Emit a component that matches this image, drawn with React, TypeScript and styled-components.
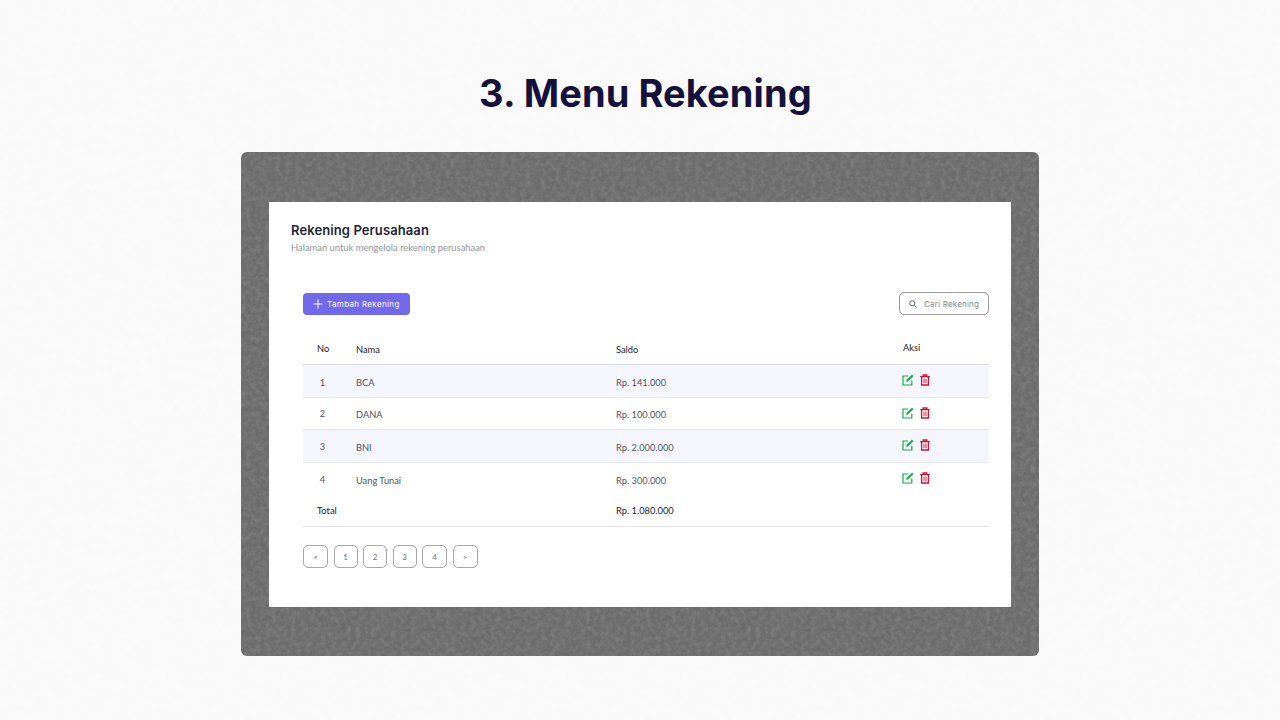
import React from "react";
import styled, { createGlobalStyle } from "styled-components";

const noise = (freq: number, tone: string | number, opacity: number, alpha = "1.6 -0.55") =>
  `url("data:image/svg+xml,${encodeURIComponent(
    `<svg xmlns='http://www.w3.org/2000/svg' width='400' height='400'><filter id='n'><feTurbulence type='fractalNoise' baseFrequency='${freq}' numOctaves='3' seed='4' stitchTiles='stitch'/><feColorMatrix values='0 0 0 0 ${tone} 0 0 0 0 ${tone} 0 0 0 0 ${tone} 0 0 0 ${alpha}'/></filter><rect width='400' height='400' filter='url(#n)' opacity='${opacity}'/></svg>`
  )}")`;

const Global = createGlobalStyle`
  html, body { margin: 0; padding: 0; height: 100%; }
  body { background: #fafafa; font-family: "Inter", "Liberation Sans", sans-serif; }
`;

const Page = styled.main`
  width: 1280px;
  height: 720px;
  overflow: hidden;
  box-sizing: border-box;
  padding-top: 69px;
  display: flex;
  flex-direction: column;
  align-items: center;
  background-color: #fafafa;
  background-image: ${noise(0.12, 0.86, 0.14)};
`;

const Title = styled.h1`
  margin: 0 0 0 11px;
  height: 48px;
  line-height: 48px;
  font-family: "Inter", sans-serif;
  font-size: 38px;
  font-weight: 700;
  letter-spacing: 0.1px;
  color: #14123d;
  white-space: nowrap;
`;

const Frame = styled.section`
  margin-top: 35px;
  width: 798px;
  height: 504px;
  box-sizing: border-box;
  padding: 50px 28px 49px;
  border-radius: 6px;
  background-color: #6c6c6c;
  background-image: ${noise(0.2, 0.3, 0.5)};
`;

const Panel = styled.div`
  width: 742px;
  height: 405px;
  box-sizing: border-box;
  padding: 20px 22px 0;
  background: #fff;
`;

const PanelTitle = styled.h2`
  margin: 0;
  font-size: 13px;
  line-height: 16px;
  font-weight: 600;
  letter-spacing: 0.1px;
  color: #1c2536;
`;

const Subtitle = styled.p`
  margin: 3px 0 0;
  font-family: "Lato", sans-serif;
  font-size: 9.4px;
  line-height: 14px;
  color: #8f939a;
`;

const Content = styled.div`
  margin: 37px 0 0 12px;
  width: 686px;
`;

const Toolbar = styled.div`
  display: flex;
  justify-content: space-between;
  align-items: center;
`;

const AddButton = styled.button`
  width: 107px;
  height: 22px;
  padding: 0 0 0 10px;
  display: flex;
  align-items: center;
  gap: 4px;
  border: 0;
  border-radius: 4px;
  background: #7168ec;
  color: #fff;
  font-family: "Inter", sans-serif;
  font-size: 8px;
  letter-spacing: 0.35px;
`;

const Search = styled.div`
  box-sizing: border-box;
  width: 90px;
  height: 23px;
  padding-left: 9px;
  display: flex;
  align-items: center;
  gap: 7px;
  border: 1px solid #9a9a9a;
  border-radius: 5px;
  font-family: "Inter", sans-serif;
  font-size: 8px;
  letter-spacing: 0.2px;
  color: #85888e;
`;

const Table = styled.div`
  margin-top: 20px;
  font-family: "Lato", sans-serif;
  font-size: 9.3px;
`;

const Row = styled.div<{ $h: number; $stripe?: boolean; $line?: string }>`
  display: grid;
  grid-template-columns: 53px 260px 285px 1fr;
  align-items: center;
  box-sizing: border-box;
  height: ${(p) => p.$h}px;
  background: ${(p) => (p.$stripe ? "#f5f6fd" : "transparent")};
  border-bottom: 1px solid ${(p) => p.$line ?? "transparent"};
`;

const Cell = styled.div<{ $head?: boolean; $strong?: boolean; $up?: number }>`
  color: ${(p) => (p.$head || p.$strong ? "#1d2026" : "#50545a")};
  font-weight: 400;
  transform: translateY(${(p) => -(p.$up ?? 0)}px);
`;

const NoCell = styled(Cell)`
  padding-left: 14px;
`;

const NumCell = styled(Cell)`
  width: 39px;
  text-align: center;
`;

const AksiHead = styled(Cell)`
  padding-left: 2px;
`;

const Actions = styled.div`
  display: flex;
  align-items: center;
  gap: 5px;
  padding-left: 1px;
  transform: translateY(-1px);
`;

const Pager = styled.nav`
  margin-top: 18px;
  display: flex;
  gap: 5.5px;
`;

const PageBtn = styled.button<{ $w: number }>`
  box-sizing: border-box;
  width: ${(p) => p.$w}px;
  height: 23px;
  padding: 0;
  border: 1px solid #a8a8a8;
  border-radius: 5px;
  background: #fff;
  font-family: "Lato", sans-serif;
  font-size: 8px;
  color: #6e7178;
`;

const Edit = () => (
  <svg width="12" height="12" viewBox="0 0 12 12" fill="none" stroke="#12ad45" strokeWidth="1.2">
    <path d="M9.8 6.5V11H1V2H6" />
    <path d="M4.5 7.4 5 5.6 10 .9 11.2 2.2 6.2 6.9Z" fill="#12ad45" strokeWidth=".6" />
  </svg>
);

const Trash = () => (
  <svg width="12" height="12" viewBox="0 0 12 12" fill="none" stroke="#d3102f" strokeWidth="1.3">
    <path d="M1.2 2.6H10.8" />
    <path d="M4.2 2.4V1H7.8V2.4" />
    <path d="M2.6 2.8V11H9.4V2.8" />
    <path d="M5 5V9M7 5V9" strokeWidth=".9" />
  </svg>
);

const Plus = () => (
  <svg width="10" height="10" viewBox="0 0 10 10" stroke="#fff" strokeWidth="1.1" fill="none">
    <path d="M5 .5V9.5M.5 5H9.5" />
  </svg>
);

const Lens = () => (
  <svg width="8" height="8" viewBox="0 0 8 8" stroke="#6a6d73" strokeWidth="1" fill="none">
    <circle cx="3.2" cy="3.2" r="2.5" />
    <path d="M5.2 5.2 7.6 7.6" />
  </svg>
);

const rows = [
  { n: 1, name: "BCA", saldo: "Rp. 141.000", h: 33, stripe: true, line: "#e6e8f4", shift: -1, numShift: -1 },
  { n: 2, name: "DANA", saldo: "Rp. 100.000", h: 32, line: "#e3e4ea", shift: -1, numShift: 0 },
  { n: 3, name: "BNI", saldo: "Rp. 2.000.000", h: 33, stripe: true, line: "#e6e8f4", shift: -1, numShift: 0 },
  { n: 4, name: "Uang Tunai", saldo: "Rp. 300.000", h: 33, shift: -1, numShift: 0 },
];

const pages: [string, number][] = [["<", 25], ["1", 24], ["2", 24], ["3", 24], ["4", 25], [">", 25]];

export default function App() {
  return (
    <Page>
      <Global />
      <Title>3. Menu Rekening</Title>
      <Frame>
        <Panel>
          <PanelTitle>Rekening Perusahaan</PanelTitle>
          <Subtitle>Halaman untuk mengelola rekening perusahaan</Subtitle>
          <Content>
            <Toolbar>
              <AddButton><Plus />Tambah Rekening</AddButton>
              <Search><Lens />Cari Rekening</Search>
            </Toolbar>
            <Table>
              <Row $h={30} $line="#d9dade">
                <NoCell $head $up={1}>No</NoCell>
                <Cell $head>Nama</Cell>
                <Cell $head>Saldo</Cell>
                <AksiHead $head $up={2}>Aksi</AksiHead>
              </Row>
              {rows.map((r) => (
                <Row key={r.n} $h={r.h} $stripe={r.stripe} $line={r.line}>
                  <NumCell $up={r.numShift}>{r.n}</NumCell>
                  <Cell $up={r.shift}>{r.name}</Cell>
                  <Cell $up={r.shift}>{r.saldo}</Cell>
                  <Actions><Edit /><Trash /></Actions>
                </Row>
              ))}
              <Row $h={31} $line="#e2e3e7">
                <NoCell $strong $up={1}>Total</NoCell>
                <div />
                <Cell $strong $up={1}>Rp. 1.080.000</Cell>
                <div />
              </Row>
            </Table>
            <Pager>
              {pages.map(([label, w]) => (
                <PageBtn key={label} $w={w}>{label}</PageBtn>
              ))}
            </Pager>
          </Content>
        </Panel>
      </Frame>
    </Page>
  );
}
